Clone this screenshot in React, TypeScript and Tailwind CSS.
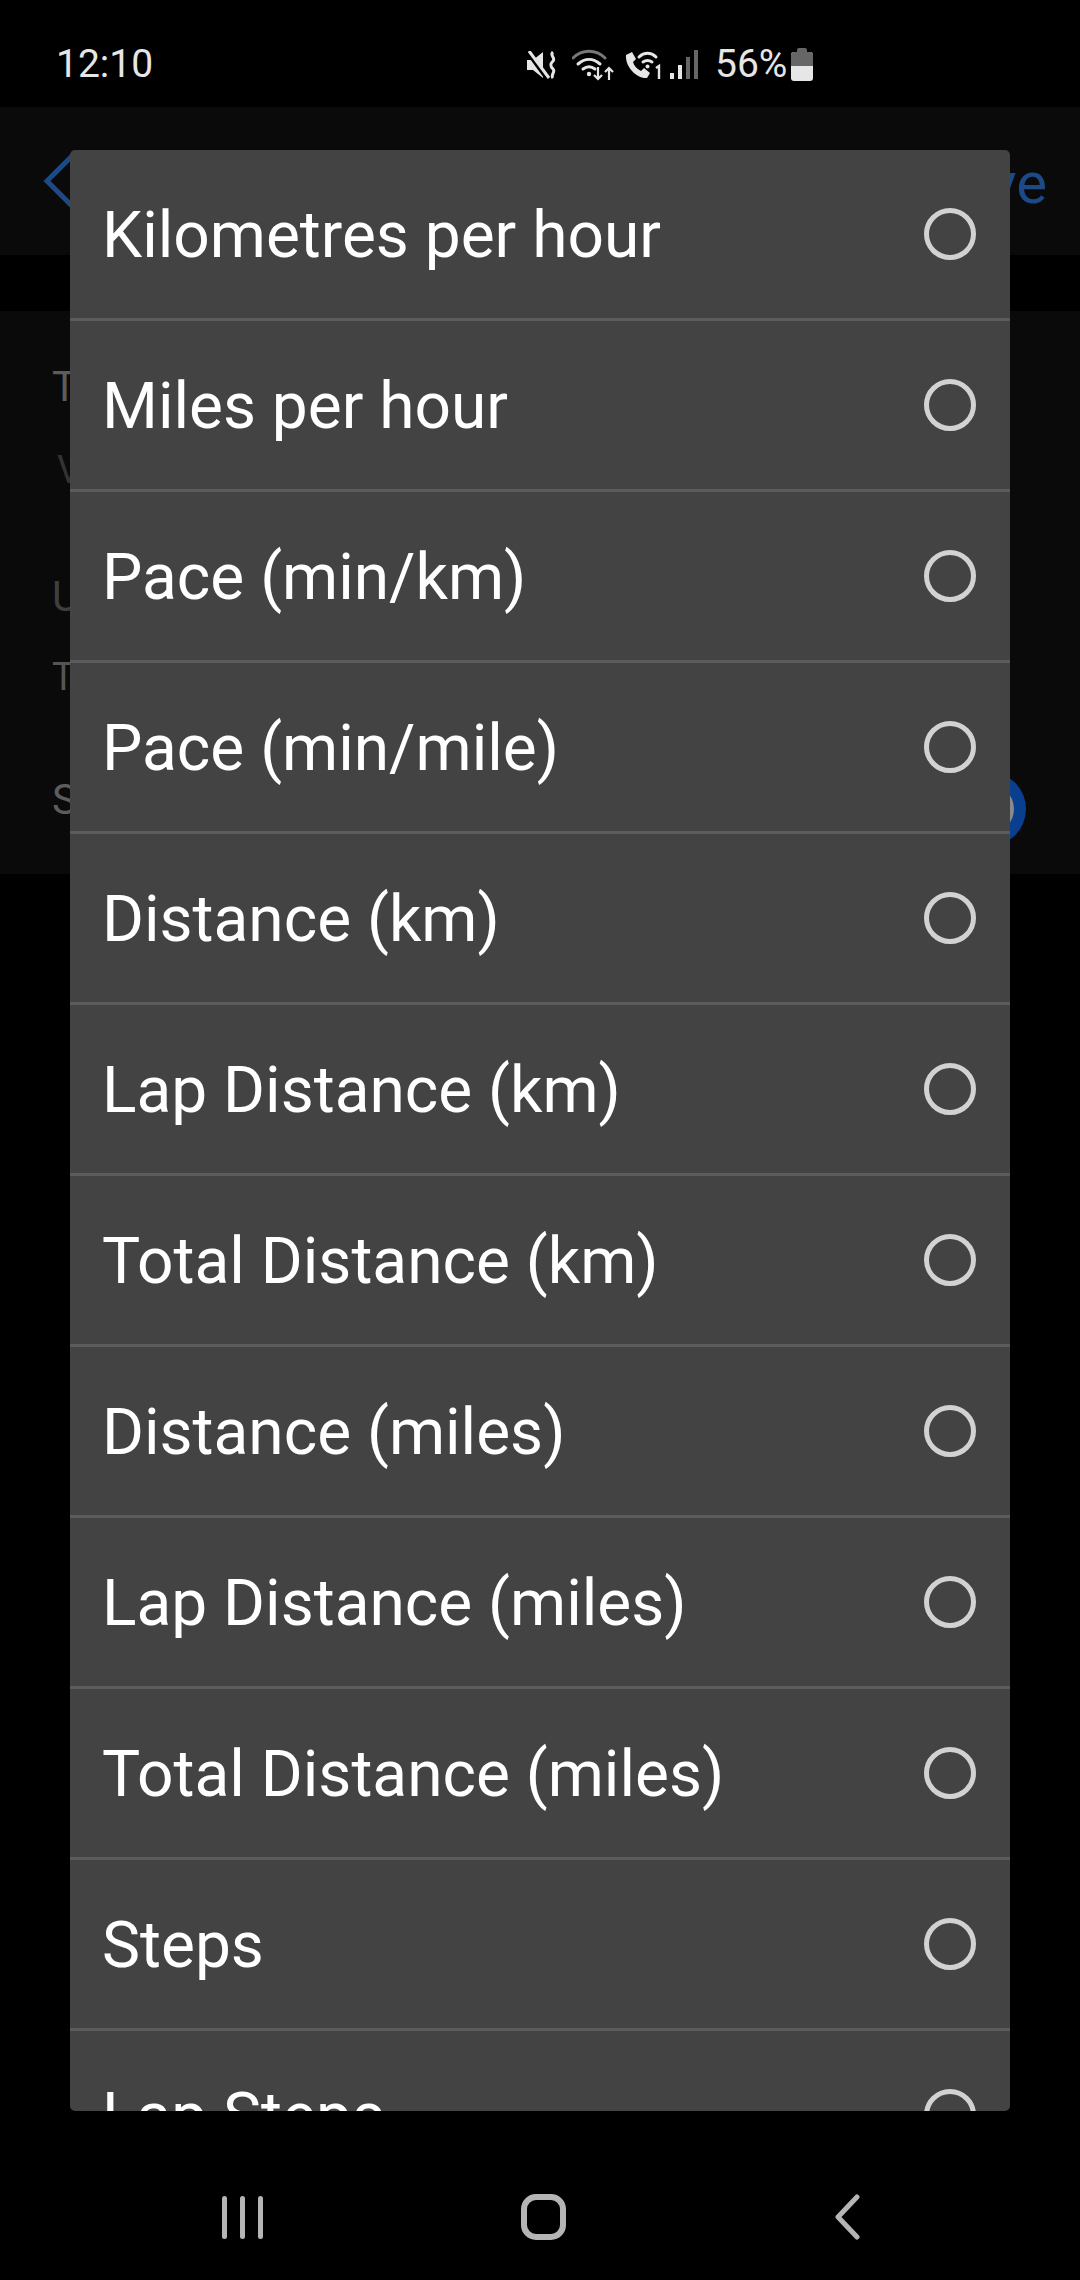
import React from "react";

const OPTIONS = [
  "Kilometres per hour",
  "Miles per hour",
  "Pace (min/km)",
  "Pace (min/mile)",
  "Distance (km)",
  "Lap Distance (km)",
  "Total Distance (km)",
  "Distance (miles)",
  "Lap Distance (miles)",
  "Total Distance (miles)",
  "Steps",
  "Lap Steps",
];

const MuteVibrateIcon = () => (
  <svg width="30" height="28" viewBox="0 0 30 28" className="text-[#e6e6e6]">
    <path d="M0 9h6l10-8v26L6 19H0z" fill="currentColor" />
    <path d="M1 1l19 26" stroke="#000" strokeWidth="5" />
    <path d="M2 0l20 27" stroke="currentColor" strokeWidth="3" />
    <path d="M26 1c-4 3 3 6 0 9s-3 5 0 8-3 6 0 9" fill="none" stroke="currentColor" strokeWidth="3" />
  </svg>
);

const WifiIcon = () => (
  <svg width="42" height="32" viewBox="0 0 42 32" fill="none" className="text-[#e6e6e6]">
    <path d="M1 9C10 0 24 0 33 9" stroke="#777" strokeWidth="3" strokeLinecap="round" />
    <path d="M6 15c7-6 15-6 22 0" stroke="currentColor" strokeWidth="3" strokeLinecap="round" />
    <path d="M11 20c4-3 8-3 12 0" stroke="currentColor" strokeWidth="3" strokeLinecap="round" />
    <circle cx="17" cy="25" r="2.2" fill="currentColor" />
    <path d="M26 18v12m-4-4l4 4 4-4M37 31V19m-4 4l4-4 4 4" stroke="currentColor" strokeWidth="2.2" />
  </svg>
);

const WifiCallIcon = () => (
  <svg width="37" height="28" viewBox="0 0 37 28" fill="none" className="text-[#e6e6e6]">
    <path d="M1 4l6-3 4 7-3 3c1 4 4 7 8 9l3-3 6 5-3 5C12 28 0 16 1 4z" fill="currentColor" />
    <path d="M14 6c5-5 12-5 17 0" stroke="currentColor" strokeWidth="3" strokeLinecap="round" />
    <path d="M18 11c3-2 6-2 9 0" stroke="currentColor" strokeWidth="3" strokeLinecap="round" />
    <circle cx="22.5" cy="15.5" r="2" fill="currentColor" />
    <path d="M31 17l3-2v13" stroke="currentColor" strokeWidth="2.4" />
  </svg>
);

const SignalIcon = () => (
  <div className="flex h-[29px] items-end gap-[4px]">
    <div className="h-[6px] w-[4px] bg-[#e6e6e6]" />
    <div className="h-[14px] w-[4px] bg-[#e6e6e6]" />
    <div className="h-[22px] w-[4px] bg-[#666666]" />
    <div className="h-[29px] w-[4px] bg-[#666666]" />
  </div>
);

const BatteryIcon = () => (
  <div className="flex flex-col items-center">
    <div className="h-[4px] w-[10px] rounded-t-[2px] bg-[#666666]" />
    <div className="flex h-[29px] w-[22px] flex-col overflow-hidden rounded-[3px] bg-[#e6e6e6]">
      <div className="h-[14px] bg-[#666666]" />
    </div>
  </div>
);

const StatusBar = () => (
  <div className="flex h-[107px] items-start bg-black pt-[45px] text-[#e6e6e6]">
    <span className="ml-[56px] w-[98px] text-[39px] leading-[39px]">12:10</span>
    <div className="ml-[373px] flex items-center">
      <MuteVibrateIcon />
      <div className="ml-[15px]"><WifiIcon /></div>
      <div className="ml-[11px]"><WifiCallIcon /></div>
      <div className="ml-[8px]"><SignalIcon /></div>
      <span className="ml-[17px] text-[39px] leading-[39px]">56%</span>
      <div className="ml-[4px]"><BatteryIcon /></div>
    </div>
  </div>
);

const Header = () => (
  <div className="flex h-[148px] items-center justify-between bg-[#0a0a0a] pl-[42px] pr-[33px] text-[#1b4a86]">
    <svg width="34" height="56" viewBox="0 0 34 56" fill="none">
      <path d="M30 3L5 28l25 25" stroke="currentColor" strokeWidth="5" />
    </svg>
    <span className="pt-[3px] text-[58px] leading-none">Save</span>
  </div>
);

const SettingsPanel = () => (
  <div className="mt-[56px] h-[563px] bg-[#0a0a0a] pl-[52px] pr-[54px] text-[#5c5c5c]">
    <div className="pt-[52px] text-[42px] leading-[48px]">Title</div>
    <div className="ml-[5px] mt-[37px] text-[38px] leading-[44px] text-[#333333]">Virtual</div>
    <div className="mt-[81px] text-[42px] leading-[48px] text-[#3f3f3f]">Units</div>
    <div className="mt-[34px] text-[38px] leading-[44px] text-[#555555]">Type</div>
    <div className="mt-[73px] flex items-center justify-between">
      <span className="pb-[18px] text-[42px] leading-[48px]">Show</span>
      <div className="flex h-[74px] w-[74px] items-center justify-center rounded-full bg-[#0a3f8f]">
        <div className="h-[50px] w-[50px] rounded-full bg-[#8a8a8a]" />
      </div>
    </div>
  </div>
);

const OptionRow = ({ label }: { label: string }) => (
  <div className="flex h-[171px] shrink-0 items-center justify-between border-b-[3px] border-[#5c5c5c] pl-[32px] pr-[34px]">
    <span className="pt-[4px] text-[64px] leading-none text-white">{label}</span>
    <div className="h-[52px] w-[52px] rounded-full border-[5px] border-[#d2d2d2]" />
  </div>
);

const NavBar = () => (
  <div className="mt-auto flex h-[126px] items-center bg-black text-[#b5b5b5]">
    <div className="ml-[222px] flex gap-[13px]">
      <div className="h-[43px] w-[5px] rounded-full bg-[#b5b5b5]" />
      <div className="h-[43px] w-[5px] rounded-full bg-[#b5b5b5]" />
      <div className="h-[43px] w-[5px] rounded-full bg-[#b5b5b5]" />
    </div>
    <div className="ml-[258px] h-[46px] w-[45px] rounded-[15px] border-[6px] border-[#b5b5b5]" />
    <svg className="ml-[268px]" width="26" height="46" viewBox="0 0 26 46" fill="none">
      <path d="M23 3L4 23l19 20" stroke="currentColor" strokeWidth="5" strokeLinecap="round" strokeLinejoin="round" />
    </svg>
  </div>
);

export default function App() {
  return (
    <div className="relative flex h-[2280px] w-[1080px] flex-col overflow-hidden bg-black font-['Roboto',sans-serif]">
      <StatusBar />
      <Header />
      <SettingsPanel />
      <NavBar />

      {/* Picker dialog over the dimmed page */}
      <div className="absolute left-[70px] top-[150px] flex h-[1961px] w-[940px] flex-col overflow-hidden rounded-[5px] bg-[#434343]">
        {OPTIONS.map((option) => (
          <OptionRow key={option} label={option} />
        ))}
      </div>
    </div>
  );
}
